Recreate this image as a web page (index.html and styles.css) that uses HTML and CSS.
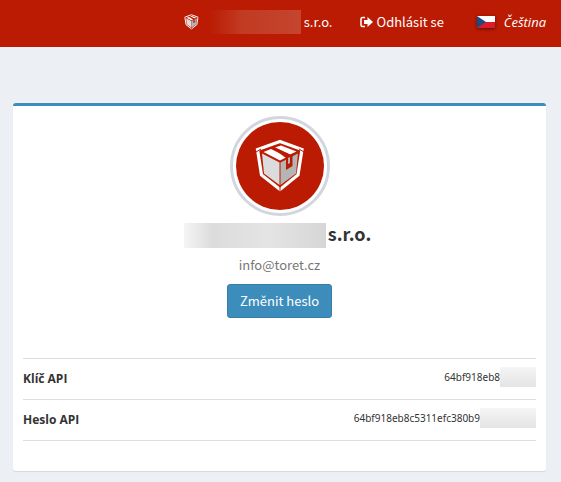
FILE: index.html
```html
<!DOCTYPE html>
<html lang="cs">
    <head>
        <meta charset="utf-8">
        <title>Profil</title>
        <link rel="stylesheet" href="styles.css">
    </head>
    <body>
        <svg class="defs" width="0" height="0" aria-hidden="true">
            <symbol id="logo" viewBox="0 0 50 54">
                <path d="M25 2.500 47 10.500 43 36 25 50.500 6.500 36 2.500 10.500Z" fill="none" stroke="#fff" stroke-width="3.200"/>
                <path d="M7 14.500 24.500 23.500V46L9 34.500Z" fill="#dcdcdc"/>
                <path d="M25.500 23.500 43 14.500 41 34.500 25.500 46Z" fill="#b5b5b5"/>
                <path d="M8.500 13 16 10 32 18 25 21.500Z" fill="#fff"/>
                <path d="M20 8.500 26 6.500 41.500 12.500 35 15.500Z" fill="#fff"/>
                <path d="M18 9.500 20 8.500 35 15.500 37.500 16.500V27L31 31V19Z" fill="#ba1b02"/>
                <path d="M33 19V25L35 24V18Z" fill="#b5b5b5"/>
                <path d="M25 46V54M1 13 6 10M44 10 49 13" fill="none" stroke="#ba1b02" stroke-width="1"/>
            </symbol>
        </svg>
        <header class="navbar">
            <a class="user" href="#">
                <svg class="user-logo" aria-hidden="true"><use href="#logo"/></svg>
                <span class="user-blur"></span>
                <span>s.r.o.</span>
            </a>
            <a class="logout" href="#">
                <svg class="logout-icon" viewBox="0 0 13 12" aria-hidden="true">
                    <path d="M5 1.500H2.500Q1 1.500 1 3V9Q1 10.500 2.500 10.500H5" fill="none" stroke="#fff" stroke-width="1.500"/>
                    <path d="M4 4H7.500V1L13 6 7.500 11V8H4Z" fill="#fff"/>
                </svg>
                <span>Odhlásit se</span>
            </a>
            <a class="lang" href="#">
                <svg class="flag" viewBox="0 0 18 12" aria-hidden="true">
                    <path d="M0 0H18V6H0Z" fill="#fff"/>
                    <path d="M0 6H18V12H0Z" fill="#dc1c2c"/>
                    <path d="M0 0 9 6 0 12Z" fill="#1d4a87"/>
                </svg>
                <em>Čeština</em>
            </a>
        </header>
        <main class="content">
            <section class="box">
                <div class="avatar">
                    <svg class="avatar-logo" aria-hidden="true"><use href="#logo"/></svg>
                </div>
                <h3 class="name"><span class="name-blur"></span>s.r.o.</h3>
                <p class="email">info@toret.cz</p>
                <button class="btn" type="button">Změnit heslo</button>
                <table class="keys">
                    <tr>
                        <th scope="row">Klíč API</th>
                        <td><div class="value">64bf918eb8<span class="key-blur"></span></div></td>
                    </tr>
                    <tr>
                        <th scope="row">Heslo API</th>
                        <td><div class="value wide">64bf918eb8c5311efc380b9<span class="key-blur"></span></div></td>
                    </tr>
                </table>
            </section>
        </main>
    </body>
</html>
```

FILE: styles.css
```css
*{
    box-sizing: border-box;
}
body{
    margin: 0;
    background: #ecf0f5;
    color: #333;
    font-family: "Noto Sans CJK JP", "Noto Sans", sans-serif;
    font-size: 13px;
    line-height: 20px;
}
.defs{
    display: none;
}
.navbar{
    display: flex;
    justify-content: flex-end;
    align-items: center;
    height: 47px;
    padding: 0 15px 3px;
    background: #ba1b02;
}
.navbar a{
    display: flex;
    align-items: center;
    color: #fff;
    text-decoration: none;
}
.user-logo{
    width: 15px;
    height: 16px;
}
.user-blur{
    width: 92px;
    height: 24px;
    margin: 0 3px 0 10px;
    background: linear-gradient(to right, #ba1b02, #c23a22 35%, #c5452e);
}
.logout{
    gap: 3px;
    margin-left: 28px;
}
.logout-icon{
    width: 13px;
    height: 12px;
}
.lang{
    gap: 9px;
    margin-left: 33px;
}
.lang em{
    font-family: "Open Sans", "Noto Sans", sans-serif;
}
.flag{
    width: 18px;
    height: 12px;
    box-shadow: 0 1px 3px rgba(0, 0, 0, 0.5);
}
.content{
    padding: 56px 15px 10px 13px;
}
.box{
    display: flex;
    flex-direction: column;
    align-items: center;
    padding: 10px 10px 30px;
    border-top: 3px solid #3c8dbc;
    border-radius: 3px;
    background: #fff;
    box-shadow: 0 1px 1px rgba(0, 0, 0, 0.1);
}
.avatar{
    display: flex;
    justify-content: center;
    align-items: center;
    width: 100px;
    height: 100px;
    padding: 3px;
    border: 3px solid #d2d6de;
    border-radius: 50%;
    background: #ba1b02 content-box;
}
.avatar-logo{
    width: 50px;
    height: 54px;
}
.name{
    display: flex;
    align-items: flex-start;
    margin: 7px 0;
    padding-right: 4px;
    font-size: 18px;
    line-height: 20px;
}
.name-blur{
    width: 142px;
    height: 25px;
    margin-right: 2px;
    background: linear-gradient(to right, #f5f5f5, #dcdcdc 20%, #e4e4e4 60%, #d6d6d6);
}
.email{
    margin: 0 0 9px;
    color: #777;
}
.btn{
    height: 34px;
    padding: 0 12px;
    border: 1px solid #367fa9;
    border-radius: 3px;
    background: #3c8dbc;
    color: #fff;
    font: inherit;
}
.keys{
    width: 100%;
    margin-top: 40px;
    border-collapse: collapse;
    border-bottom: 1px solid #ddd;
}
.keys tr{
    height: 41px;
    border-top: 1px solid #ddd;
}
.keys th,
.keys td{
    padding: 0;
    text-align: left;
}
.keys th{
    font-family: "Open Sans", "Noto Sans", sans-serif;
    font-size: 12px;
}
.keys td{
    padding-bottom: 4px;
}
.value{
    display: flex;
    justify-content: flex-end;
    align-items: center;
    font-family: "Noto Sans", sans-serif;
    font-size: 10px;
}
.key-blur{
    width: 36px;
    height: 20px;
    background: linear-gradient(#f5f5f5, #e4e4e4);
}
.wide .key-blur{
    width: 56px;
}
```
